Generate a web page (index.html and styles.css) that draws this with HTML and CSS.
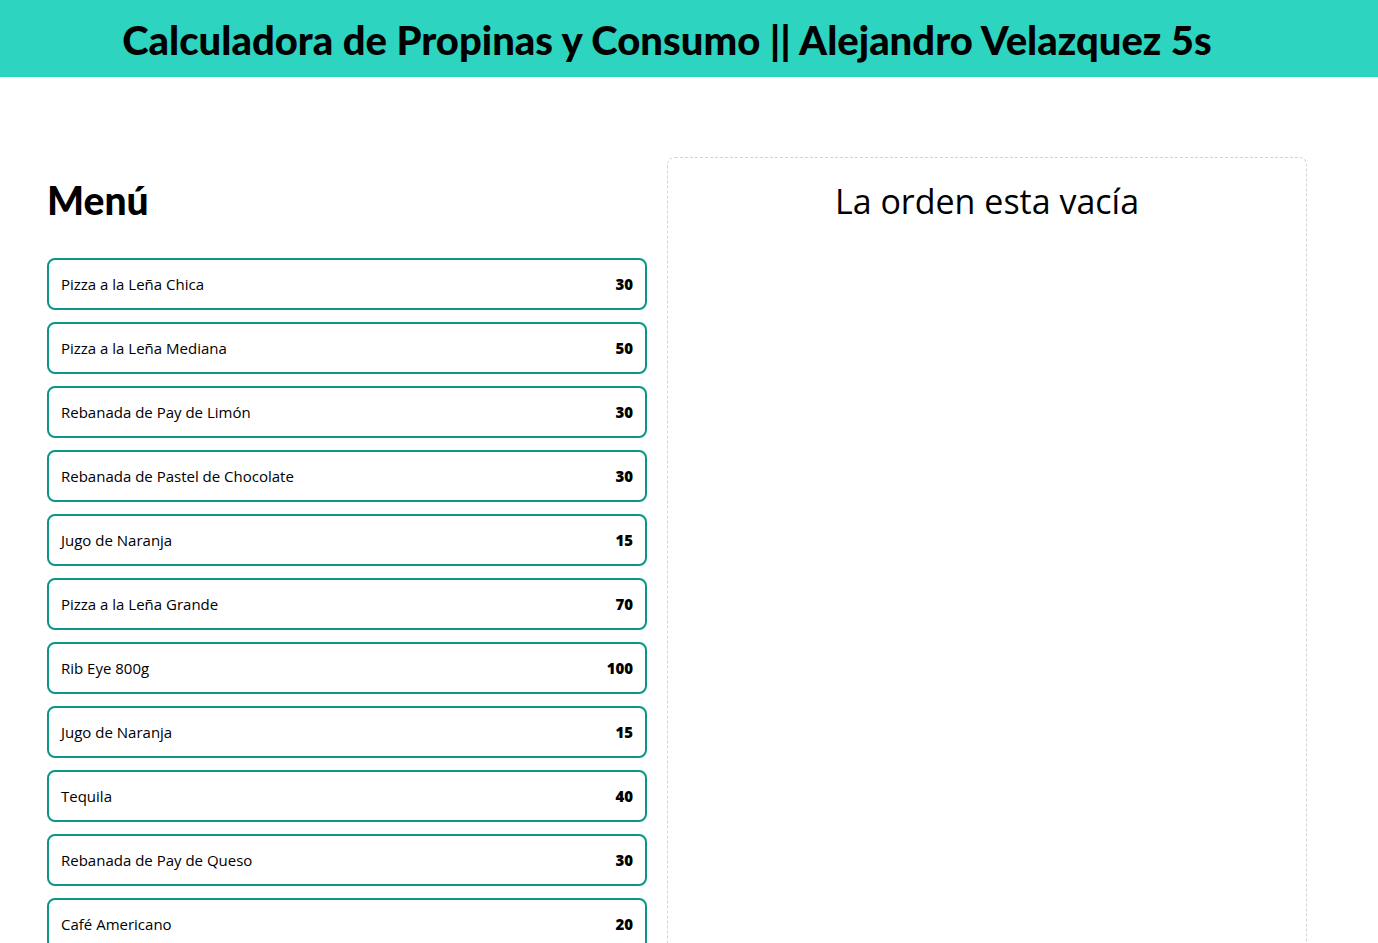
FILE: index.html
```html
<!DOCTYPE html>
<html lang="es">
<head>
<meta charset="utf-8">
<title>Calculadora de Propinas y Consumo</title>
<link rel="stylesheet" href="styles.css">
</head>
<body>
<header class="header">
  <h1 class="header-title">Calculadora de Propinas y Consumo || Alejandro Velazquez 5s</h1>
</header>
<main class="main">
  <section class="menu">
    <h2 class="menu-title">Menú</h2>
    <div class="menu-list">
      <button class="item"><span>Pizza a la Leña Chica</span><span class="price">30</span></button>
      <button class="item"><span>Pizza a la Leña Mediana</span><span class="price">50</span></button>
      <button class="item"><span>Rebanada de Pay de Limón</span><span class="price">30</span></button>
      <button class="item"><span>Rebanada de Pastel de Chocolate</span><span class="price">30</span></button>
      <button class="item"><span>Jugo de Naranja</span><span class="price">15</span></button>
      <button class="item"><span>Pizza a la Leña Grande</span><span class="price">70</span></button>
      <button class="item"><span>Rib Eye 800g</span><span class="price">100</span></button>
      <button class="item"><span>Jugo de Naranja</span><span class="price">15</span></button>
      <button class="item"><span>Tequila</span><span class="price">40</span></button>
      <button class="item"><span>Rebanada de Pay de Queso</span><span class="price">30</span></button>
      <button class="item"><span>Café Americano</span><span class="price">20</span></button>
    </div>
  </section>
  <section class="order">
    <p class="order-empty">La orden esta vacía</p>
  </section>
</main>
</body>
</html>
```
FILE: styles.css
```css
* { box-sizing: border-box; }
html, body { margin: 0; padding: 0; }
body {
  font-family: "Open Sans", "Noto Sans", sans-serif;
  color: #000;
  background: #fff;
}
.header {
  background: #2dd4bf;
  height: 77px;
  display: flex;
  align-items: center;
}
.header-title {
  width: 1280px;
  margin: 2px 0 0 27px;
  text-align: center;
  font-family: Lato, "Noto Sans", sans-serif;
  font-weight: 900;
  font-size: 40px;
  line-height: 44px;
}
.main {
  width: 1280px;
  margin-left: 27px;
  padding: 80px 0;
  display: grid;
  grid-template-columns: 1fr 1fr;
  align-items: start;
}
.menu { padding: 21px 20px 20px; }
.menu-title {
  margin: 0;
  font-family: Lato, "Noto Sans", sans-serif;
  font-weight: 900;
  font-size: 39px;
  line-height: 40px;
  padding-top: 2px;
  height: 40px;
}
.menu-list {
  margin-top: 40px;
  display: flex;
  flex-direction: column;
  gap: 12px;
}
.item {
  display: flex;
  justify-content: space-between;
  align-items: center;
  width: 100%;
  padding: 12px;
  border: 2px solid #0d9488;
  border-radius: 8px;
  background: #fff;
  font-family: "Open Sans", "Noto Sans", sans-serif;
  font-size: 15px;
  line-height: 24px;
  color: #000;
  text-align: left;
}
.price { font-weight: 800; }
.order {
  border: 1px dashed #d1d5db;
  border-radius: 8px;
  padding: 23px 20px 20px;
  min-height: 900px;
}
.order-empty {
  margin: 0;
  text-align: center;
  font-size: 34px;
  line-height: 40px;
  font-weight: 400;
}
```
